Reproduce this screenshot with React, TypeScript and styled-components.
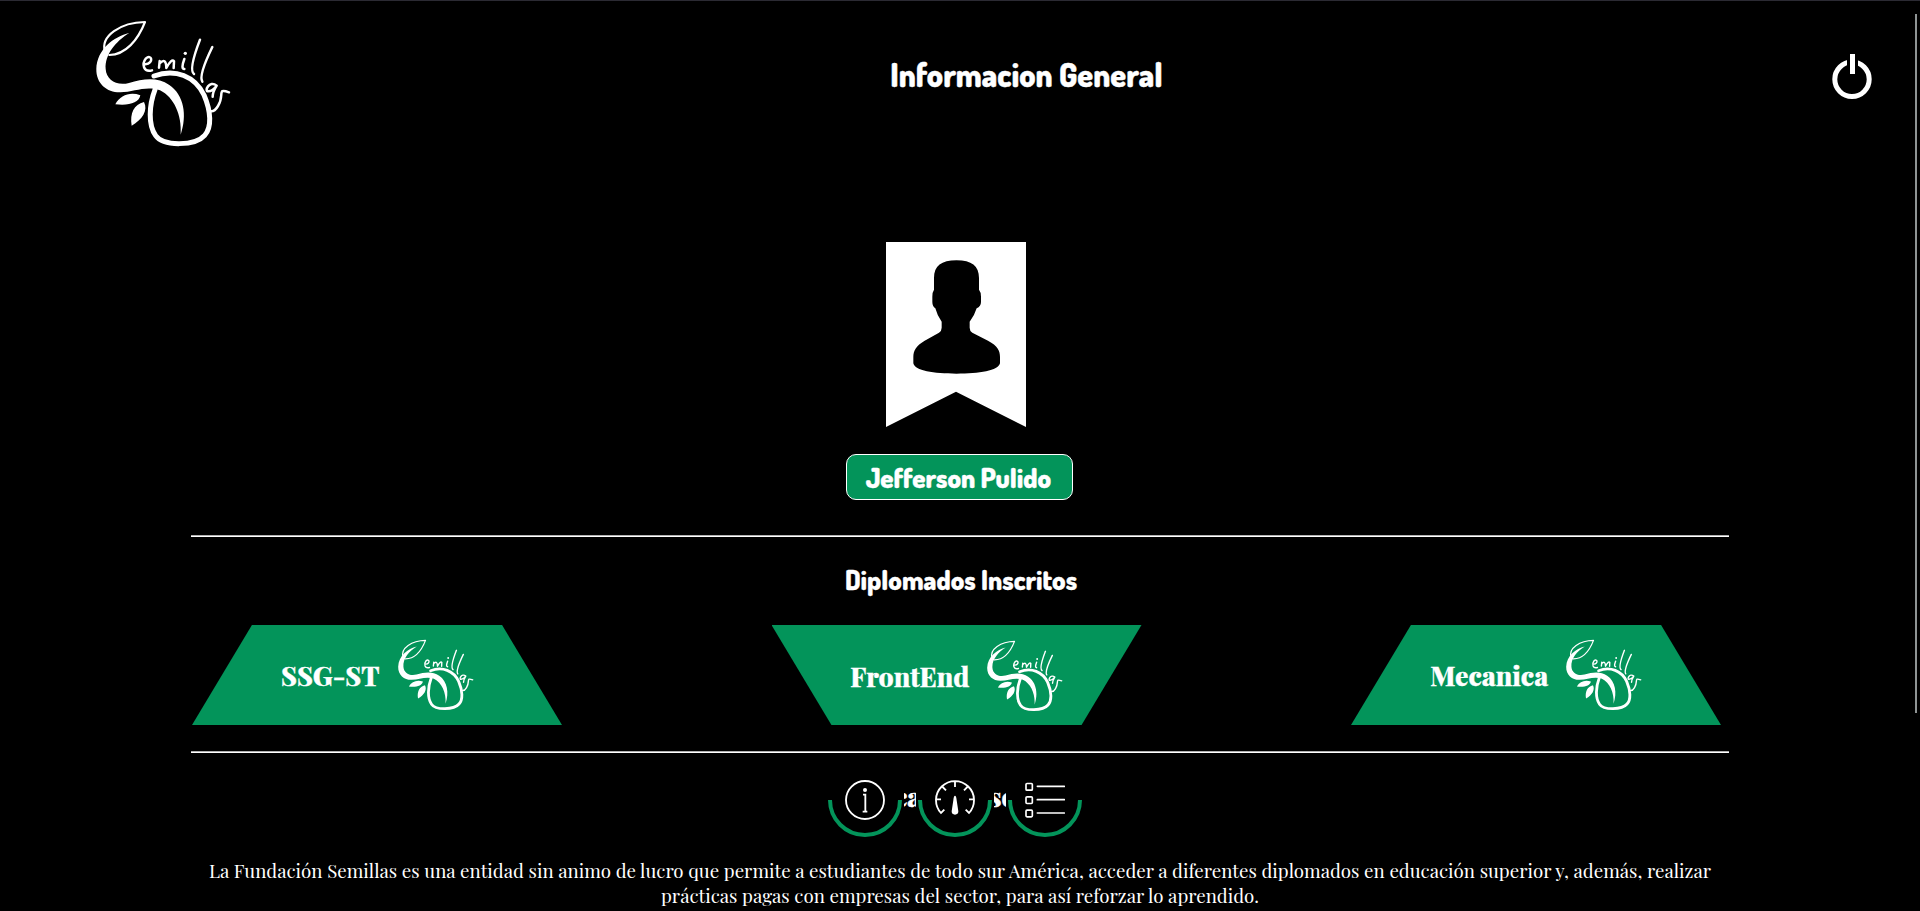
import React from 'react';
import styled, { createGlobalStyle } from 'styled-components';

const Global = createGlobalStyle`
  * { box-sizing: border-box; margin: 0; }
  html, body { background: #000; }
  body { margin: 0; height: 911px; overflow: hidden; color: #fff; font-family: 'Playfair Display', 'Liberation Serif', serif; }
  svg { display: block; flex: none; }
`;
const rounded = "Dosis, Lato, 'Open Sans', sans-serif";
const green = '#03945a';

const Page = styled.div`
  position: relative;
  height: 911px;
  overflow: hidden;
  border-top: 1px solid #2b2a33;
`;
const ScrollThumb = styled.div`
  position: absolute;
  top: 13px;
  right: 3px;
  width: 2px;
  height: 699px;
  background: #8f9494;
`;
const Content = styled.div`
  display: flex;
  flex-direction: column;
  align-items: center;
`;
const Header = styled.header`
  width: 100%;
  height: 241px;
  display: flex;
  justify-content: space-between;
  align-items: flex-start;
  padding: 0 48px 0 80px;
`;
const Brand = styled.div`
  margin-top: -1px;
`;
const Title = styled.h1`
  font: 800 32px/40px ${rounded};
  -webkit-text-stroke: 0.4px #fff;
  white-space: nowrap;
  margin: 54px 29px 0 0;
`;
const Power = styled.button`
  border: 0;
  background: none;
  padding: 0;
  margin-top: 52px;
`;
const Portrait = styled.div`
  width: 140px;
  height: 185px;
  margin-right: 8px;
  background: #fff;
  clip-path: polygon(0 0, 100% 0, 100% 100%, 50% 81%, 0 100%);
`;
const NameTag = styled.div`
  width: 227px;
  height: 46px;
  margin: 27px 1px 0 0;
  padding-right: 2px;
  border: 1px solid #fff;
  border-radius: 10px;
  background: ${green};
  font: 800 26.67px/45px ${rounded};
  -webkit-text-stroke: 0.4px #fff;
  text-align: center;
  white-space: nowrap;
`;
const Section = styled.section`
  width: 1538px;
  height: 218px;
  margin-top: 35px;
  padding: 1px 0;
  border-top: 1px solid #b0b0b0;
  border-bottom: 1px solid #fff;
  box-shadow: inset 0 1px #fff, inset 0 -1px #b0b0b0;
`;
const SectionTitle = styled.h2`
  font: 800 26.67px/32px ${rounded};
  -webkit-text-stroke: 0.3px #fff;
  text-align: center;
  margin: 27px 0 29px;
  padding-left: 2px;
`;
const Courses = styled.div`
  display: flex;
  justify-content: space-between;
  padding: 0 8px 0 1px;
`;
const Course = styled.div<{ $down?: boolean }>`
  width: 370px;
  height: 100px;
  display: flex;
  align-items: center;
  justify-content: center;
  gap: 9px;
  padding: ${p => (p.$down ? '2px 0 0 11px' : '0 0 0 11px')};
  background: ${green};
  clip-path: ${p => p.$down
    ? 'polygon(0 0, 100% 0, 83.8% 100%, 16.2% 100%)'
    : 'polygon(16.2% 0, 83.8% 0, 100% 100%, 0 100%)'};
  svg { margin-bottom: 4px; }
`;
const CourseName = styled.span`
  font-size: 26.67px;
  font-weight: 800;
  -webkit-text-stroke: 0.4px #fff;
  white-space: nowrap;
`;
const Nav = styled.nav`
  display: flex;
  height: 105px;
  padding-top: 10px;
  margin-right: 10px;
`;
const NavItem = styled.div`
  position: relative;
  width: 74px;
  height: 74px;
  display: grid;
  place-items: center;
  &::after {
    content: '';
    position: absolute;
    inset: 0;
    border: 4px solid ${green};
    border-radius: 50%;
    clip-path: inset(37px 0 0 0);
  }
`;
const NavGap = styled.div<{ $shift: number }>`
  width: 12px;
  height: 74px;
  margin: 0 2px;
  overflow: hidden;
  font-size: 26.67px;
  font-weight: 800;
  -webkit-text-stroke: 0.5px #fff;
  line-height: 67px;
  text-indent: ${p => p.$shift}px;
  white-space: nowrap;
`;
const About = styled.p`
  width: 1538px;
  text-align: center;
  font-size: 18.72px;
  line-height: 25px;
`;

const Logo = ({ size }: { size: number }) => (
  <svg width={size} height={size * 160 / 170} viewBox="0 0 510 480" fill="none" stroke="#fff" strokeLinecap="round" strokeLinejoin="round">
    <path d="M75 156C60 108 122 67 195 66C174 120 137 164 88 165" strokeWidth="6.5" />
    <path d="M148 99C101 110 51 148 49 207C48 252 82 278 121 277C162 276 198 256 240 271C282 292 306 345 302 404C322 345 312 285 268 255C232 230 190 236 147 249C109 259 79 239 77 207C74 164 107 124 148 99Z" fill="#fff" stroke="none" />
    <path d="M222 228C286 204 345 229 372 285C393 334 396 382 374 406C346 438 250 440 227 407C204 375 207 316 225 269" strokeWidth="15" />
    <path d="M106 313C121 285 151 275 181 286C177 309 146 318 106 313ZM155 377C149 340 162 313 192 306C205 331 187 359 155 377Z" fill="#fff" stroke="none" />
    <path d="M196 193C224 189 214 161 198 175C184 193 191 218 216 211M239 183L237 203M239 190Q258 171 259 204Q275 174 282 184L281 204M313 177Q302 207 313 207M360 119Q325 210 342 222M397 141Q355 227 367 245M410 257C388 238 371 276 385 274Q398 273 410 257Q398 276 398 290M447 277C409 263 435 286 414 318Q404 335 393 334" strokeWidth="7.5" />
    <circle cx="316" cy="160" r="5" fill="#fff" stroke="none" />
  </svg>
);

const PowerIcon = () => (
  <svg width="40" height="48" viewBox="0 0 40 48">
    <circle cx="20" cy="26.3" r="17.2" fill="none" stroke="#fff" strokeWidth="5" />
    <path d="M15 4h11v14h-11z" fill="#000" />
    <path d="M18 1h5v20h-5z" fill="#fff" />
  </svg>
);

const Person = () => (
  <svg width="140" height="185" viewBox="0 0 420 555">
    <path d="M144 108C144 72 166 55 211.500 55C257 55 279 72 279 108V143Q285 150 285 164V180Q285 193 272 199Q265 222 251 239V257Q251 267 259 272L306 296C335 311 342 326 342 345V364C337 386 280 395 211.500 395C143 395 86 386 82 364V345C82 326 90 311 116 296L159 272Q167 267 167 257V239Q154 222 148 199Q139 193 139 180V164Q139 150 144 143Z" />
  </svg>
);

const InfoIcon = () => (
  <svg width="40" height="40" viewBox="0 0 120 120" fill="none" stroke="#fff" strokeWidth="5.500">
    <circle cx="60" cy="60" r="57" />
    <path d="M54 44H61V95M53 95H67" />
    <circle cx="60" cy="30" r="6" fill="#fff" stroke="none" />
  </svg>
);

const GaugeIcon = () => (
  <svg width="40" height="40" viewBox="0 0 120 120" fill="none" stroke="#fff" strokeWidth="5.500">
    <path d="M28 89L18 99A57 57 0 1 1 102 99L92 89M3 58H18M117 58H102M60 4V21M20 18L33 31M100 18L87 31" />
    <path d="M60 47Q64 47 65 61L70 94A10 10 0 1 1 50 94L55 61Q56 47 60 47Z" fill="#fff" stroke="none" />
  </svg>
);

const ListIcon = () => (
  <svg width="40" height="40" viewBox="0 0 120 120" fill="none" stroke="#fff" strokeWidth="5">
    {[19, 59, 99].map(y => (
      <g key={y}>
        <rect x="3" y={y - 8.5} width="19" height="20" rx="3" />
        <path d={`M37 ${y}H118`} strokeLinecap="round" />
      </g>
    ))}
  </svg>
);

export default function App() {
  return (
    <>
      <Global />
      <Page>
        <Content>
          <Header>
            <Brand><Logo size={170} /></Brand>
            <Title>Informacion General</Title>
            <Power aria-label="Salir"><PowerIcon /></Power>
          </Header>
          <Portrait><Person /></Portrait>
          <NameTag>Jefferson Pulido</NameTag>
          <Section>
            <SectionTitle>Diplomados Inscritos</SectionTitle>
            <Courses>
              <Course><CourseName>SSG-ST</CourseName><Logo size={95.5} /></Course>
              <Course $down><CourseName>FrontEnd</CourseName><Logo size={95.5} /></Course>
              <Course><CourseName>Mecanica</CourseName><Logo size={95.5} /></Course>
            </Courses>
          </Section>
          <Nav>
            <NavItem><InfoIcon /></NavItem>
            <NavGap $shift={-10}>ca</NavGap>
            <NavItem><GaugeIcon /></NavItem>
            <NavGap $shift={-5}>so</NavGap>
            <NavItem><ListIcon /></NavItem>
          </Nav>
          <About>
            La Fundación Semillas es una entidad sin animo de lucro que permite a estudiantes de todo sur América, acceder a diferentes diplomados en educación superior y, además, realizar prácticas pagas con empresas del sector, para así reforzar lo aprendido.
          </About>
        </Content>
        <ScrollThumb />
      </Page>
    </>
  );
}
